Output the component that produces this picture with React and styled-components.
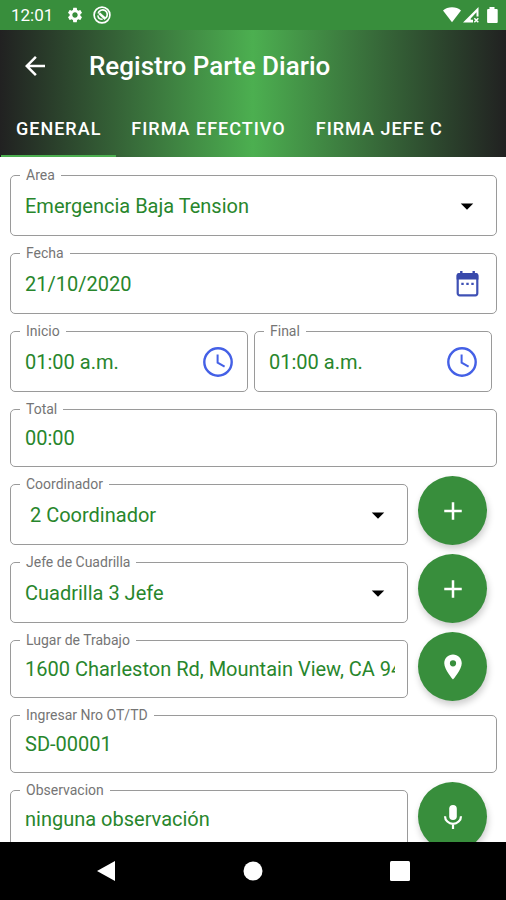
import React, { useState } from "react";
import styled, { createGlobalStyle } from "styled-components";
import {
  MdAdd,
  MdArrowBack,
  MdArrowDropDown,
  MdLocationOn,
  MdSettings,
} from "react-icons/md";

const GlobalStyle = createGlobalStyle`
  * {
    box-sizing: border-box;
  }
  body {
    margin: 0;
    font-family: Roboto, "Liberation Sans", sans-serif;
    background-color: #fff;
  }
  button, input, select {
    font-family: inherit;
  }
`;

const Screen = styled.div`
  display: flex;
  flex-direction: column;
  height: 100vh;
`;
const StatusBar = styled.div`
  display: flex;
  align-items: center;
  justify-content: space-between;
  height: 30px;
  padding: 0 8px 0 11px;
  color: #fff;
  background-color: #388e3c;
`;
const StatusGroup = styled.div`
  display: flex;
  align-items: center;
  gap: 9px;
`;
const Clock = styled.span`
  margin-right: 4px;
  font-size: 17px;
  line-height: 24px;
`;
const Header = styled.header`
  color: #fff;
  background: linear-gradient(to right, #212121, #4caf50 50%, #212121);
`;
const Toolbar = styled.div`
  display: flex;
  align-items: center;
  gap: 39px;
  height: 71px;
  padding: 0 20px;
`;
const BackButton = styled.button`
  display: flex;
  padding: 0;
  border: none;
  color: inherit;
  background: none;
`;
const Title = styled.h1`
  margin: 0;
  font-size: 26px;
  font-weight: 500;
  line-height: 32px;
`;
const Tabs = styled.nav`
  display: flex;
  padding-left: 1px;
  overflow: hidden;
`;
const Tab = styled.button`
  flex: none;
  height: 56px;
  padding: 0 15px;
  border: none;
  border-bottom: 2px solid ${({ $active }) => ($active ? "#4caf50" : "transparent")};
  color: inherit;
  background: none;
  font-size: 18px;
  font-weight: 500;
  letter-spacing: 1px;
`;
const Form = styled.form`
  display: flex;
  flex: 1;
  flex-direction: column;
  gap: 9px;
  min-height: 0;
  padding: 10px 9px 0 10px;
  overflow: auto;
  scrollbar-width: none;
`;
const Row = styled.div`
  display: flex;
  flex: none;
  align-items: flex-start;
  gap: ${({ $gap }) => $gap || 0}px;
  padding-right: ${({ $end }) => $end || 0}px;
`;
const Outline = styled.fieldset`
  flex: 1;
  min-width: 0;
  margin: 0;
  padding: 0 0 ${({ $tall }) => ($tall ? 6 : 8)}px;
  border: 1px solid #9a9a9a;
  border-radius: 5px;
`;
const Legend = styled.legend`
  margin-left: 9px;
  padding: 0 6px;
  color: #757575;
  font-size: 14px;
  line-height: 16px;
`;
const Control = styled.div`
  display: grid;
  grid-template-columns: minmax(0, 1fr) auto;
  align-items: center;
  height: ${({ $tall }) => ($tall ? 46 : 41)}px;
  padding: 0 12px 0 14px;
`;
const Input = styled.input`
  width: 100%;
  padding: 0;
  border: none;
  outline: none;
  color: #28862c;
  background: none;
  font-size: 20px;
  line-height: 28px;
`;
const Select = styled.select`
  grid-area: 1 / 1 / 2 / 3;
  width: 100%;
  padding: 0;
  border: none;
  outline: none;
  appearance: none;
  color: #28862c;
  background: none;
  font-size: 20px;
  line-height: 28px;
`;
const Arrow = styled(MdArrowDropDown)`
  grid-area: 1 / 2 / 2 / 3;
  margin-right: 2px;
  color: #000;
  pointer-events: none;
`;
const PickerButton = styled.button`
  display: flex;
  margin-right: ${({ $end }) => $end}px;
  padding: 0;
  border: none;
  background: none;
`;
const Fab = styled.button`
  display: flex;
  flex: none;
  align-items: center;
  justify-content: center;
  width: 69px;
  height: 69px;
  margin: 0 0 -8px;
  padding: 0;
  border: none;
  border-radius: 50%;
  color: #fff;
  background-color: #388e3c;
  box-shadow: 1px 4px 7px rgba(0, 0, 0, 0.2);
`;
const NavBar = styled.nav`
  display: flex;
  flex: none;
  align-items: center;
  justify-content: space-around;
  height: 58px;
  padding: 0 33px;
  background-color: #000;
`;
const NavButton = styled.button`
  display: flex;
  padding: 0;
  border: none;
  color: #fff;
  background: none;
`;

function CalendarIcon() {
  return (
    <svg width="23" height="26" viewBox="0 0 23 26" fill="none">
      <rect x="1.7" y="3" width="19.600" height="21.300" rx="2" stroke="#3f51b5" strokeWidth="2.200" />
      <path d="M.6 4.500a2.500 2.500 0 0 1 2.500-2.500h16.800a2.500 2.500 0 0 1 2.500 2.500V8.600H.6z" fill="#3949ab" />
      <path d="M5.300 0v3M17.700 0v3" stroke="#3949ab" strokeWidth="2.400" />
      <path d="M5.300 12.900h2.400M10.300 12.900h2.400M15.300 12.900h2.400" stroke="#3f51b5" strokeWidth="2.400" />
    </svg>
  );
}

function TimeIcon() {
  return (
    <svg width="30" height="30" viewBox="0 0 30 30" fill="none" stroke="#4460e6">
      <circle cx="15" cy="15" r="13.700" strokeWidth="2.400" />
      <path d="M14.600 7.600v8l7 4" strokeWidth="2" />
    </svg>
  );
}

function MicIcon() {
  return (
    <svg width="20" height="26" viewBox="0 0 20 26" fill="none">
      <rect x="6.200" y="1" width="7.600" height="15" rx="3.800" fill="#fff" />
      <path d="M2 12.200a8 7.600 0 0 0 16 0M10 19.600V25" stroke="#fff" strokeWidth="2.200" />
    </svg>
  );
}

function CaptureIcon() {
  return (
    <svg width="18" height="18" viewBox="0 0 18 18" fill="none" stroke="#fff">
      <circle cx="9" cy="9" r="7.900" strokeWidth="1.700" />
      <path d="M5.200 7.500a4.600 4.600 0 1 1 7.300 4.600" strokeWidth="1.700" />
      <path d="M4.800 9.300c.4 2.600 2.600 4.100 4.800 4" strokeWidth="1.500" />
      <path d="M6.300 7.400l6.200 5.600" strokeWidth="2.400" />
    </svg>
  );
}

function SignalIcons() {
  return (
    <svg width="55" height="18" viewBox="0 0 55 18" fill="#fff">
      <path d="M0 4.500C2.500 2.300 5.500 1.200 9 1.200s6.500 1.100 9 3.300L9 16.300z" />
      <path fillRule="evenodd" d="M35.500 1v9.500h-2V6.200l-5.800 6.300v1.300h2.300v2.700H20z" />
      <path d="M31.300 12.300l4 4M35.300 12.300l-4 4" stroke="#fff" strokeWidth="1.500" />
      <path d="M46.500 1h5v2h2.200a1 1 0 0 1 1 1v12a1 1 0 0 1-1 1h-8.600a1 1 0 0 1-1-1V4a1 1 0 0 1 1-1h1.400z" />
    </svg>
  );
}

function Field({ id, label, tall, children }) {
  return (
    <Outline $tall={tall}>
      <Legend>
        <label htmlFor={id}>{label}</label>
      </Legend>
      <Control $tall={tall}>{children}</Control>
    </Outline>
  );
}

function TextField({ id, label, value, tall, children }) {
  return (
    <Field id={id} label={label} tall={tall}>
      <Input id={id} name={id} type="text" defaultValue={value} />
      {children}
    </Field>
  );
}

function SelectField({ id, label, value }) {
  return (
    <Field id={id} label={label} tall>
      <Select id={id} name={id} defaultValue={value}>
        <option value={value}>{value}</option>
      </Select>
      <Arrow size={30} />
    </Field>
  );
}

const TABS = ["GENERAL", "FIRMA EFECTIVO", "FIRMA JEFE C"];

export default function App() {
  const [activeTab, setActiveTab] = useState(TABS[0]);

  return (
    <Screen>
      <GlobalStyle />
      <StatusBar>
        <StatusGroup>
          <Clock>12:01</Clock>
          <MdSettings size={18} />
          <CaptureIcon />
        </StatusGroup>
        <SignalIcons />
      </StatusBar>
      <Header>
        <Toolbar>
          <BackButton type="button" aria-label="Volver">
            <MdArrowBack size={30} />
          </BackButton>
          <Title>Registro Parte Diario</Title>
        </Toolbar>
        <Tabs>
          {TABS.map((tab) => (
            <Tab
              key={tab}
              type="button"
              $active={tab === activeTab}
              onClick={() => setActiveTab(tab)}
            >
              {tab}
            </Tab>
          ))}
        </Tabs>
      </Header>
      <Form onSubmit={(e) => e.preventDefault()}>
        <Row>
          <SelectField id="area" label="Area" value="Emergencia Baja Tension" />
        </Row>
        <Row>
          <TextField id="fecha" label="Fecha" value="21/10/2020" tall>
            <PickerButton type="button" aria-label="Elegir fecha" $end={5}>
              <CalendarIcon />
            </PickerButton>
          </TextField>
        </Row>
        <Row $gap={6} $end={5}>
          <TextField id="inicio" label="Inicio" value="01:00 a.m." tall>
            <PickerButton type="button" aria-label="Elegir inicio" $end={2}>
              <TimeIcon />
            </PickerButton>
          </TextField>
          <TextField id="final" label="Final" value="01:00 a.m." tall>
            <PickerButton type="button" aria-label="Elegir final" $end={2}>
              <TimeIcon />
            </PickerButton>
          </TextField>
        </Row>
        <Row>
          <TextField id="total" label="Total" value="00:00" />
        </Row>
        <Row $gap={10} $end={10}>
          <SelectField
            id="coordinador"
            label="Coordinador"
            value={"\u00a02 Coordinador"}
          />
          <Fab type="button" aria-label="Agregar coordinador">
            <MdAdd size={30} />
          </Fab>
        </Row>
        <Row $gap={10} $end={10}>
          <SelectField id="jefe" label="Jefe de Cuadrilla" value="Cuadrilla 3 Jefe" />
          <Fab type="button" aria-label="Agregar jefe">
            <MdAdd size={30} />
          </Fab>
        </Row>
        <Row $gap={10} $end={10}>
          <TextField
            id="lugar"
            label="Lugar de Trabajo"
            value="1600 Charleston Rd, Mountain View, CA 94043"
          />
          <Fab type="button" aria-label="Ubicar lugar">
            <MdLocationOn size={30} />
          </Fab>
        </Row>
        <Row>
          <TextField id="orden" label="Ingresar Nro OT/TD" value="SD-00001" />
        </Row>
        <Row $gap={10} $end={10}>
          <TextField
            id="observacion"
            label="Observacion"
            value="ninguna observación"
          />
          <Fab type="button" aria-label="Dictar observación">
            <MicIcon />
          </Fab>
        </Row>
      </Form>
      <NavBar>
        <NavButton type="button" aria-label="Atrás">
          <svg width="20" height="22" viewBox="0 0 20 22" fill="currentColor">
            <path d="M19 1v20L1 11z" />
          </svg>
        </NavButton>
        <NavButton type="button" aria-label="Inicio del sistema">
          <svg width="20" height="20" viewBox="0 0 20 20" fill="currentColor">
            <circle cx="10" cy="10" r="9.500" />
          </svg>
        </NavButton>
        <NavButton type="button" aria-label="Recientes">
          <svg width="20" height="20" viewBox="0 0 20 20" fill="currentColor">
            <rect width="20" height="20" rx="1.500" />
          </svg>
        </NavButton>
      </NavBar>
    </Screen>
  );
}
